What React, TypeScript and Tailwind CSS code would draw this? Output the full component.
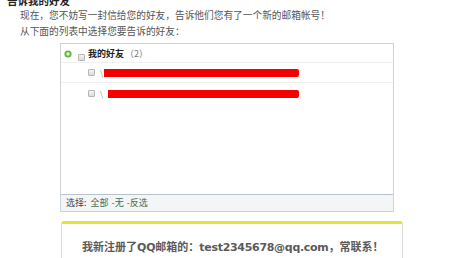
import React from "react";

const Check = () => (
  <span className="inline-block w-[7px] h-[7px] border border-[#b5b5b5] bg-gradient-to-b from-[#f4f4f4] to-[#dcdcdc] rounded-[1px] shrink-0" />
);

export default function App() {
  return (
    <div
      className="w-[454px] h-[258px] overflow-hidden bg-white text-[#444]"
      style={{ fontFamily: '"Noto Sans CJK SC", "Liberation Sans", sans-serif' }}
    >
      <div className="mt-[-5px] pl-[7px] text-[10.5px] leading-[12px] font-bold text-[#222]">告诉我的好友</div>
      <div className="pl-[20px] text-[9.7px] leading-[16px] text-[#555]">
        现在，您不妨写一封信给您的好友，告诉他们您有了一个新的邮箱帐号！
      </div>
      <div className="pl-[20px] text-[9.7px] leading-[16px] text-[#555]">从下面的列表中选择您要告诉的好友：</div>

      <div className="ml-[60px] mt-[4px] w-[334px] h-[169px] border border-[#cfd3d8] flex flex-col">
        <div className="flex-1 bg-white pt-[2px]">
          <div className="flex items-center h-[17px] pl-[3px] border-b border-[#f0f0f0]">
            <svg width="8" height="8" viewBox="0 0 8 8" className="shrink-0">
              <circle cx="4" cy="4" r="3.6" fill="#5fb843" />
              <circle cx="4" cy="4" r="1.7" fill="#e9f6e2" />
            </svg>
            <span className="ml-[6px]">
              <Check />
            </span>
            <span className="ml-[3px] text-[9px] font-bold text-[#222]">我的好友</span>
            <span className="ml-[1px] text-[9px] text-[#777]">（2）</span>
          </div>
          <div className="flex items-center h-[20px] pl-[27px] border-b border-[#f0f0f0]">
            <Check />
            <span className="ml-[5px] text-[8px] text-[#999]">\</span>
            <div className="ml-[1px] w-[195px] h-[8px] bg-[#f40000] rounded-r-[2px]" />
          </div>
          <div className="flex items-center h-[21px] pl-[27px]">
            <Check />
            <span className="ml-[5px] text-[8px] text-[#999]">\</span>
            <div className="ml-[5px] w-[191px] h-[8px] bg-[#f40000] rounded-r-[2px]" />
          </div>
        </div>
        <div className="h-[17px] shrink-0 bg-[#f4f5f7] border-t border-[#b9c2cf] flex items-center pl-[5px] text-[9px]">
          <span className="text-[#444]">选择:</span>
          <span className="ml-[4px] text-[#3f6e52]">全部</span>
          <span className="ml-[3px] text-[#3f6e52]">-无</span>
          <span className="ml-[3px] text-[#3f6e52]">-反选</span>
        </div>
      </div>

      <div className="ml-[61px] mt-[9px] w-[342px] h-[60px] border-t-[3px] border-t-[#e8df3a] border-x border-x-[#dcdcdc] rounded-t-[3px]">
        <div className="pt-[15px] pl-[20px] text-[11px] leading-[14px] font-bold text-[#5a5a5a] whitespace-nowrap">
          我新注册了
          <span className="tracking-[-0.2px]" style={{ fontFamily: '"DejaVu Sans", sans-serif' }}>QQ</span>
          邮箱的：
          <span className="tracking-[-0.3px]" style={{ fontFamily: '"DejaVu Sans", sans-serif' }}>test2345678@qq.com</span>
          ，常联系！
        </div>
      </div>
    </div>
  );
}
